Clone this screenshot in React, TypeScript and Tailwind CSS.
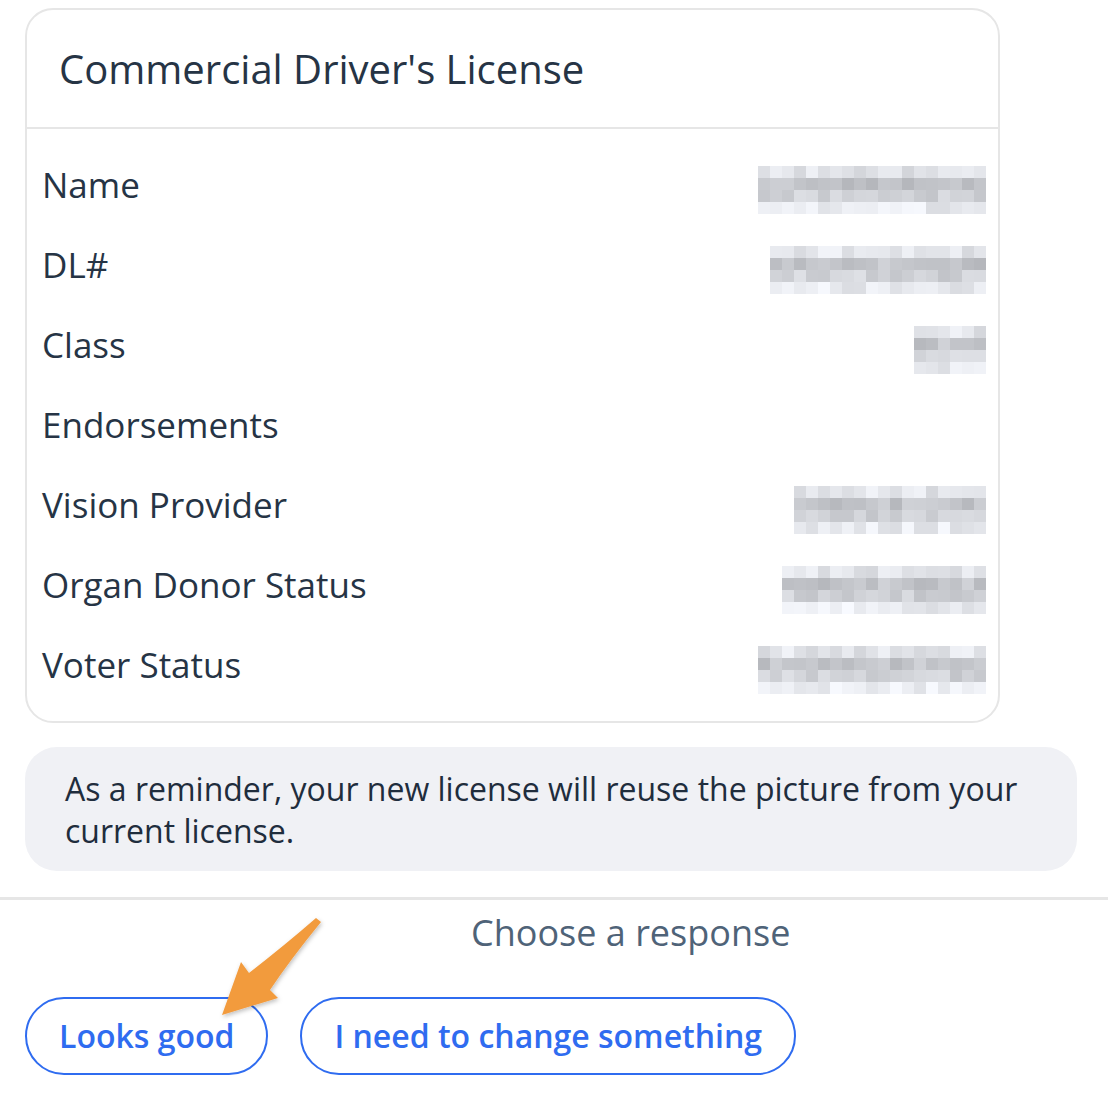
import React from 'react';

// pixelated placeholder for the redacted values
type Redacted = { cols: number; seed: number };

const rows: { label: string; value?: Redacted }[] = [
  { label: 'Name', value: { cols: 19, seed: 3 } },
  { label: 'DL#', value: { cols: 18, seed: 7 } },
  { label: 'Class', value: { cols: 6, seed: 11 } },
  { label: 'Endorsements' },
  { label: 'Vision Provider', value: { cols: 16, seed: 5 } },
  { label: 'Organ Donor Status', value: { cols: 17, seed: 13 } },
  { label: 'Voter Status', value: { cols: 19, seed: 17 } },
];

const shade = (seed: number, c: number, r: number) => {
  const n = Math.sin(seed * 91.7 + c * 12.9898 + r * 78.233) * 43758.5453;
  const t = n - Math.floor(n);
  // middle rows are the darker ones
  const base = r === 1 ? 0.45 : r === 2 ? 0.3 : r === 0 ? 0.08 : 0.0;
  const v = Math.min(1, base + t * 0.35);
  const g = Math.round(252 - v * 85);
  return `rgb(${g - 4},${g - 2},${g + 3})`;
};

function Mosaic({ cols, seed }: Redacted) {
  const cell = 12;
  return (
    <svg width={cols * cell} height={cell * 4} className="block mt-[10px]">
      {Array.from({ length: 4 }).map((_, r) =>
        Array.from({ length: cols }).map((_, c) => (
          <rect key={`${r}-${c}`} x={c * cell} y={r * cell} width={cell} height={cell} fill={shade(seed, c, r)} />
        ))
      )}
    </svg>
  );
}

function Arrow() {
  return (
    <svg className="absolute left-0 top-0 pointer-events-none" width="340" height="1100" viewBox="0 0 340 1100">
      <defs>
        <filter id="sh" x="-20%" y="-20%" width="140%" height="140%">
          <feDropShadow dx="1" dy="2" stdDeviation="2" floodColor="#000" floodOpacity="0.25" />
        </filter>
      </defs>
      <path
        d="M316 918 L321 922 Q290 960 270 990 L278 998 L222 1015 L241 962 L249 973 Q285 945 316 918 Z"
        fill="#f29b3e"
        filter="url(#sh)"
      />
    </svg>
  );
}

export default function App() {
  return (
    <div className="relative w-[1108px] h-[1100px] bg-white overflow-hidden" style={{ fontFamily: '"Open Sans", "Liberation Sans", sans-serif' }}>
      <div className="pl-[25px] pt-2">
        {/* 카드 */}
        <div className="w-[975px] rounded-[28px] border-2 border-[#e6e6e6]">
          <div className="h-[119px] flex items-center px-[32px] border-b-2 border-[#e6e6e6]">
            <h1 className="text-[40px] leading-[48px] text-[#263445]">Commercial Driver's License</h1>
          </div>
          <div className="py-4">
            {rows.map((row) => (
              <div key={row.label} className="h-[80px] flex items-center justify-between pl-[15px] pr-3">
                <span className="text-[35px] leading-[44px] text-[#263445]">{row.label}</span>
                {row.value && <Mosaic {...row.value} />}
              </div>
            ))}
          </div>
        </div>

        <div className="mt-[24px] w-[1052px] rounded-[32px] bg-[#f0f1f5] pl-[40px] pr-6 pt-[21px] pb-[19px]">
          <p className="text-[32px] leading-[42px] text-[#1f2d3d]">
            As a reminder, your new license will reuse the picture from your current license.
          </p>
        </div>
      </div>

      <div className="mt-[26px] h-[3px] bg-[#e6e6e6]" />

      <div className="pl-[471px] pt-[9px]">
        <span className="block text-[36px] leading-[48px] text-[#4f6378]">Choose a response</span>
      </div>

      <div className="flex gap-[32px] pl-[25px] mt-[40px]">
        <button className="h-[78px] px-[32px] rounded-full border-2 border-[#2f6cf0] text-[32px] font-semibold text-[#2f6cf0]">
          Looks good
        </button>
        <button className="h-[78px] px-[32px] rounded-full border-2 border-[#2f6cf0] text-[32px] font-semibold text-[#2f6cf0]">
          I need to change something
        </button>
      </div>

      <Arrow />
    </div>
  );
}
